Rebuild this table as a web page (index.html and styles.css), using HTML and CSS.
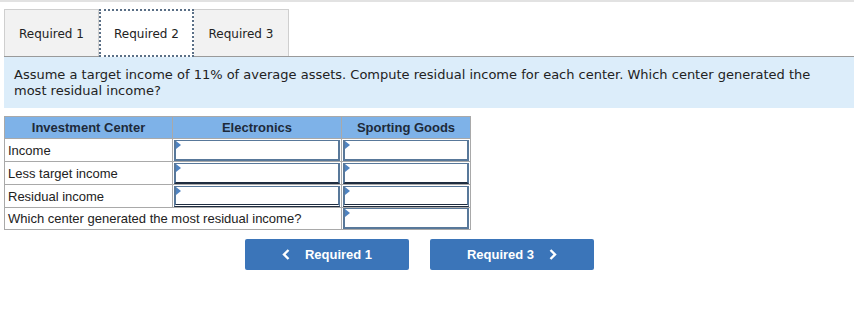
FILE: index.html
```html
<!DOCTYPE html>
<html lang="en">
<head>
  <meta charset="UTF-8">
  <title>Residual Income</title>
  <link rel="stylesheet" href="styles.css">
</head>
<body>
  <div class="topline"></div>
  <div class="question">
    <nav class="tabs">
      <button class="tab">Required 1</button>
      <button class="tab active">Required 2</button>
      <button class="tab">Required 3</button>
    </nav>
    <div class="prompt">
      Assume a target income of 11% of average assets. Compute residual income for each center. Which center generated the most residual income?
    </div>

    <table class="answer">
      <thead>
        <tr>
          <th class="c1">Investment Center</th>
          <th class="c2">Electronics</th>
          <th class="c3">Sporting Goods</th>
        </tr>
      </thead>
      <tbody>
        <tr>
          <td>Income</td>
          <td class="input"><span class="cell"></span></td>
          <td class="input"><span class="cell"></span></td>
        </tr>
        <tr>
          <td>Less target income</td>
          <td class="input"><span class="cell total-under"></span></td>
          <td class="input"><span class="cell total-under"></span></td>
        </tr>
        <tr>
          <td>Residual income</td>
          <td class="input"><span class="cell total"></span></td>
          <td class="input"><span class="cell total"></span></td>
        </tr>
        <tr>
          <td colspan="2">Which center generated the most residual income?</td>
          <td class="input"><span class="cell"></span></td>
        </tr>
      </tbody>
    </table>

    <div class="nav-buttons">
      <button class="nav-btn">
        <svg class="chev" width="8" height="11" viewBox="0 0 8 11"><path d="M6.5 1 L2 5.5 L6.5 10" fill="none" stroke="#fff" stroke-width="2.4"/></svg>
        Required 1
      </button>
      <button class="nav-btn">
        Required 3
        <svg class="chev" width="8" height="11" viewBox="0 0 8 11"><path d="M1.5 1 L6 5.5 L1.5 10" fill="none" stroke="#fff" stroke-width="2.4"/></svg>
      </button>
    </div>
  </div>
</body>
</html>
```

FILE: styles.css
```css
* {
  margin: 0;
  padding: 0;
  box-sizing: border-box;
}

body {
  background: #fff;
  font-family: 'Liberation Sans', Arial, sans-serif;
  color: #222;
}

.topline {
  height: 2px;
  width: 854px;
  background: #e2e2e2;
}

.question {
  padding: 7px 8px 0 4px;
}

/* tabs */
.tabs {
  display: flex;
  height: 47px;
}

.tab {
  width: 95px;
  height: 47px;
  background: #f2f2f2;
  border: 1px solid #cfcfcf;
  border-bottom: none;
  font-family: Verdana, 'DejaVu Sans', sans-serif;
  font-size: 12px;
  color: #222;
  padding-top: 2px;
}

.tab.active {
  background: #fff;
  border: 2px dotted #5a6f86;
  position: relative;
  z-index: 1;
  height: 48px;
}

.tab.active + .tab {
  border-left: none;
}

.prompt {
  background: #dcedfa;
  border-top: 1px solid #9a9a9a;
  padding: 10px 10px 9px 10px;
  font-family: Verdana, 'DejaVu Sans', sans-serif;
  font-size: 13px;
  line-height: 16px;
  color: #222;
}

/* answer grid */
.answer {
  margin-top: 8px;
  border-collapse: collapse;
  font-size: 13px;
}

.answer th {
  background: #7eb2e8;
  color: #1d2a3a;
  font-weight: bold;
  height: 22px;
  border: 1px solid #a9a9a9;
  text-align: center;
  padding: 0;
}

.answer th.c1 { width: 168px; }
.answer th.c2 { width: 169px; }
.answer th.c3 { width: 129px; }

.answer td {
  height: 23px;
  border: 1px solid #a9a9a9;
  padding: 0 3px;
  color: #222;
}

.answer tr:last-child td {
  height: 21px;
}

.answer td.input {
  padding: 0;
}

.cell {
  display: block;
  height: 21px;
  margin: 0 1px;
  border: 2px solid #58789a;
  border-top-width: 1px;
  background: #fff;
  position: relative;
}

.cell::before {
  content: "";
  position: absolute;
  left: 0;
  top: 0;
  border-top: 4px solid transparent;
  border-bottom: 4px solid transparent;
  border-left: 5px solid #4f83c0;
}

.cell.total-under {
  border-bottom: 2px solid #1f2d40;
}

.cell.total {
  border-bottom: 3px double #1f2d40;
}

/* prev / next */
.nav-buttons {
  display: flex;
  gap: 21px;
  margin: 9px 0 0 241px;
}

.nav-btn {
  width: 164px;
  height: 31px;
  background: #3b75b9;
  border: none;
  border-radius: 2px;
  color: #fff;
  font-family: 'Liberation Sans', Arial, sans-serif;
  font-weight: bold;
  font-size: 13px;
  display: flex;
  align-items: center;
  justify-content: center;
  gap: 15px;
}
```
